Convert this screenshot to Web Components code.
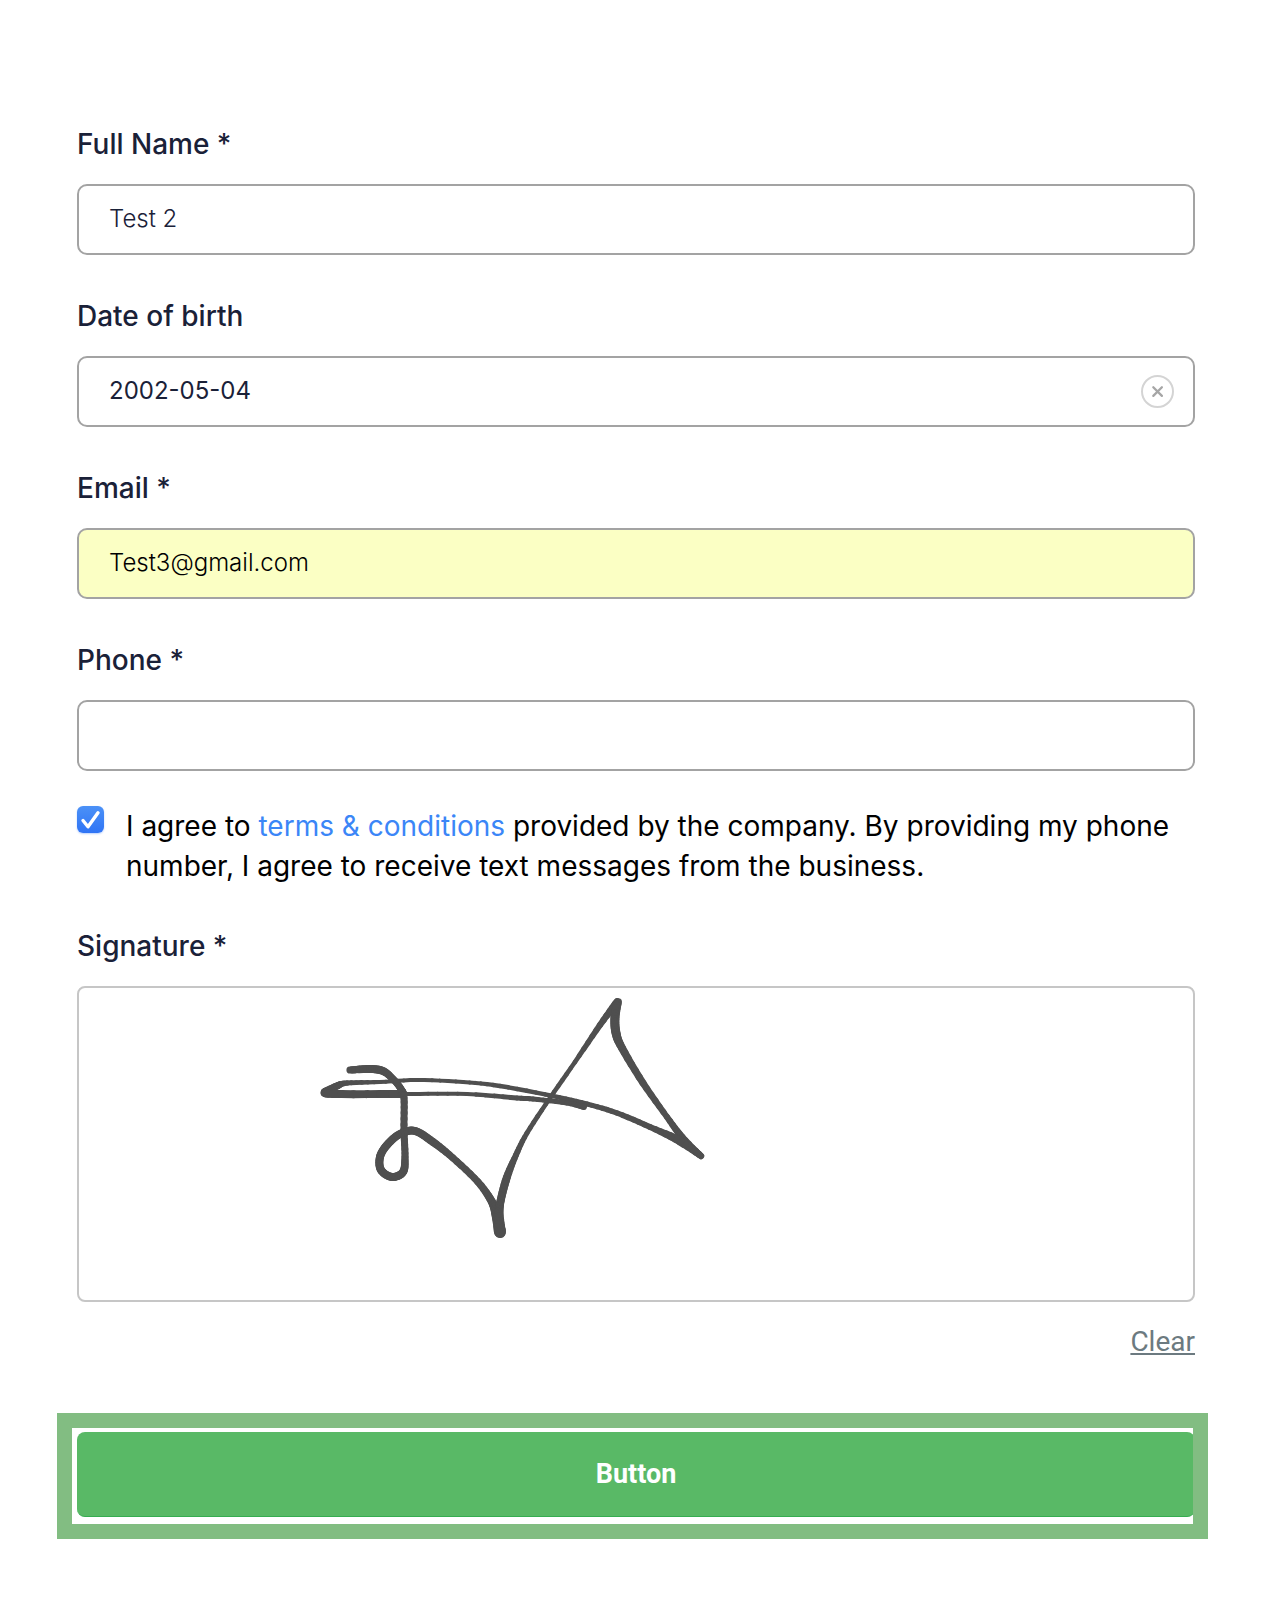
<!DOCTYPE html>
<html lang="en">
<head>
<meta charset="utf-8">
<meta name="viewport" content="width=device-width, initial-scale=1">
<title>Form</title>
<style>
  body {
    margin: 0;
    background: #fff;
    color: #1a2138;
    font-family: Inter, "Liberation Sans", sans-serif;
    font-size: 28px;
    line-height: 40px;
  }
</style>
</head>
<body>

<x-form>
  <x-field label="Full Name *" value="Test 2" weight="300"></x-field>
  <x-field label="Date of birth" value="2002-05-04" clearable></x-field>
  <x-field label="Email *" type="email" value="Test3@gmail.com" weight="300" autofilled></x-field>
  <x-field label="Phone *" type="tel"></x-field>
  <x-consent>I agree to <a href="#terms">terms &amp; conditions</a> provided by the company. By providing my phone number, I agree to receive text messages from the business.</x-consent>
  <x-signature label="Signature *"></x-signature>
  <x-submit>Button</x-submit>
</x-form>

<template id="x-form-template">
  <style>
    :host {
      display: block;
      padding: 124px 71px 83px 77px;
    }
    form {
      display: flex;
      flex-direction: column;
    }
  </style>
  <form>
    <slot></slot>
  </form>
</template>

<template id="x-field-template">
  <style>
    :host {
      display: block;
      margin-bottom: 41px;
    }
    :host(:nth-of-type(4)) {
      margin-bottom: 35px;
    }
    label {
      display: block;
      margin-bottom: 20px;
      font-weight: 500;
    }
    .box {
      display: flex;
      align-items: center;
      box-sizing: border-box;
      height: 71px;
      padding-right: 19px;
      border: 2px solid #a3a3a3;
      border-radius: 10px;
      overflow: hidden;
    }
    :host([autofilled]) .box {
      background: #fbffc4;
    }
    input {
      flex: 1;
      min-width: 0;
      padding: 0 0 2px 30px;
      border: 0;
      outline: 0;
      background: none;
      color: inherit;
      font: inherit;
      font-size: 24px;
    }
    :host([weight="300"]) input {
      font-weight: 300;
    }
    :host([autofilled]) input {
      color: #000;
    }
    button {
      display: flex;
      width: 33px;
      height: 33px;
      padding: 0;
      border: 0;
      background: none;
      cursor: pointer;
    }
    button[hidden] {
      display: none;
    }
  </style>
  <label for="input"></label>
  <div class="box">
    <input id="input" type="text">
    <button type="button" aria-label="Clear date" hidden>
      <svg width="33" height="33" viewBox="0 0 33 33" fill="none" aria-hidden="true">
        <circle cx="16.5" cy="16.5" r="15.5" stroke="#d4d4d4" stroke-width="2"></circle>
        <path d="M12.3 12.3l8.6 8.6M20.9 12.3l-8.6 8.6" stroke="#a6a6a6" stroke-width="2.3" stroke-linecap="round"></path>
      </svg>
    </button>
  </div>
</template>

<template id="x-consent-template">
  <style>
    :host {
      display: flex;
      align-items: flex-start;
      gap: 22px;
      margin-bottom: 40px;
      color: #000;
    }
    input {
      flex: none;
      appearance: none;
      width: 27px;
      height: 27px;
      margin: 0;
      border-radius: 6px;
      background: linear-gradient(#4b91f7, #2f74f5);
      box-shadow: 0 1px 2px #2f74f555;
    }
    .tick {
      display: grid;
    }
    .tick > * {
      grid-area: 1 / 1;
    }
    svg {
      pointer-events: none;
    }
    input:not(:checked) {
      background: #fff;
      box-shadow: inset 0 0 0 1px #a3a3a3;
    }
    ::slotted(a) {
      color: #3b86f7;
      text-decoration: none;
    }
  </style>
  <span class="tick">
    <input id="agree" type="checkbox" checked>
    <svg width="27" height="27" viewBox="0 0 27 27" fill="none" aria-hidden="true">
      <path d="M6 14.5l5 6.3L21 6.8" stroke="#fff" stroke-width="3.4" stroke-linecap="round" stroke-linejoin="round"></path>
    </svg>
  </span>
  <label for="agree"><slot></slot></label>
</template>

<template id="x-signature-template">
  <style>
    :host {
      display: flex;
      flex-direction: column;
      margin-bottom: 74px;
    }
    .label {
      margin-bottom: 20px;
      font-weight: 500;
    }
    .pad {
      box-sizing: border-box;
      height: 316px;
      border: 2px solid #c6c6c6;
      border-radius: 8px;
      overflow: hidden;
    }
    svg {
      display: block;
      width: 100%;
      height: 312px;
      stroke: #4f4f4f;
      stroke-linecap: round;
    }
    button {
      align-self: flex-end;
      margin-top: 24px;
      padding: 0;
      border: 0;
      background: none;
      color: #6c7a80;
      font: 28px/32px Roboto, sans-serif;
      text-decoration: underline;
      cursor: pointer;
    }
  </style>
  <div id="label" class="label"></div>
  <div class="pad" role="img" aria-labelledby="label"><svg></svg></div>
  <button type="button">Clear</button>
</template>

<template id="x-submit-template">
  <style>
    :host {
      display: block;
      position: relative;
    }
    /* highlight frame drawn over the edges of the button */
    :host::after {
      content: "";
      position: absolute;
      inset: -19px -13px -22px -20px;
      border: 15px solid #82bd82;
      pointer-events: none;
    }
    button {
      display: block;
      width: 100%;
      height: 85px;
      padding: 0;
      border: 0;
      border-bottom: 1px solid #35ad50;
      border-radius: 8px;
      background: #59b966;
      color: #fff;
      font: 700 27px/32px Roboto, sans-serif;
      cursor: pointer;
    }
  </style>
  <button type="submit"><slot></slot></button>
</template>

<script>
  class BaseElement extends HTMLElement {
    constructor() {
      super();
      const template = document.getElementById(this.nodeName.toLowerCase() + "-template");
      this.attachShadow({ mode: "open" }).appendChild(template.content.cloneNode(true));
    }
  }

  customElements.define("x-form", class extends BaseElement {});

  customElements.define("x-field", class extends BaseElement {
    connectedCallback() {
      const input = this.shadowRoot.querySelector("input");
      const clear = this.shadowRoot.querySelector("button");

      this.shadowRoot.querySelector("label").textContent = this.getAttribute("label");
      input.type = this.getAttribute("type") || "text";
      input.value = this.getAttribute("value") || "";
      clear.hidden = !this.hasAttribute("clearable");

      clear.addEventListener("click", () => {
        input.value = "";
        input.focus();
      });
    }
  });

  customElements.define("x-consent", class extends BaseElement {});

  // each stroke is a list of [x, y, pen width]
  const STROKES = [
    [[271, 82, 7], [291, 81, 8], [304, 83, 8], [314, 91, 7], [322, 101, 7], [325, 110, 7], [325, 142, 7], [326, 169, 7], [324, 184, 8], [313, 189, 8], [302, 182, 8], [301, 169, 8], [308, 157, 8], [321, 146, 8], [336, 143, 8], [354, 154, 8], [374, 170, 7], [399, 194, 7], [413, 214, 8], [418, 229, 10], [421, 244, 12]],
    [[421, 244, 12], [420, 225, 9], [422, 211, 8], [428, 189, 8], [437, 167, 6], [448, 145, 5], [471, 110, 4.5], [496, 74, 4.5], [521, 37, 6], [538, 14, 7.5]],
    [[539, 14, 7.5], [536, 29, 9], [537, 45, 9], [543, 60, 8], [564, 95, 7], [588, 129, 6], [603, 149, 7], [622, 168, 6]],
    [[622, 168, 6], [601, 153, 9], [571, 139, 6], [538, 125, 5.5], [508, 116, 5], [474, 108, 4.5], [421, 98, 4.5], [384, 94, 4], [338, 92, 4], [301, 94, 4], [268, 95, 5], [258, 98, 7], [246, 104, 8]],
    [[246, 104, 8], [254, 106, 8], [321, 106, 8]],
    [[321, 106, 5], [334, 106, 4], [388, 106, 4], [438, 110, 5], [454, 111, 5], [488, 115, 5], [505, 119, 6]],
  ];

  function spline(a, b, c, d, t) {
    return (2 * b + (c - a) * t + (2 * a - 5 * b + 4 * c - d) * t * t + (3 * b - a - 3 * c + d) * t * t * t) / 2;
  }

  customElements.define("x-signature", class extends BaseElement {
    connectedCallback() {
      const svg = this.shadowRoot.querySelector("svg");
      this.shadowRoot.querySelector("#label").textContent = this.getAttribute("label");
      this.shadowRoot.querySelector("button").addEventListener("click", () => svg.replaceChildren());
      STROKES.forEach((points) => this.drawStroke(svg, points));
    }

    drawStroke(svg, points) {
      const steps = 6;
      let prev = points[0];
      for (let i = 0; i < points.length - 1; i++) {
        const b = points[i];
        const c = points[i + 1];
        const a = points[i - 1] || b;
        const d = points[i + 2] || c;
        for (let s = 1; s <= steps; s++) {
          const t = s / steps;
          const next = [spline(a[0], b[0], c[0], d[0], t), spline(a[1], b[1], c[1], d[1], t), b[2] + (c[2] - b[2]) * t];
          const line = document.createElementNS("http://www.w3.org/2000/svg", "path");
          line.setAttribute("d", `M${prev[0]} ${prev[1]}L${next[0]} ${next[1]}`);
          line.setAttribute("stroke-width", next[2]);
          svg.appendChild(line);
          prev = next;
        }
      }
    }
  });

  customElements.define("x-submit", class extends BaseElement {});
</script>
</body>
</html>
